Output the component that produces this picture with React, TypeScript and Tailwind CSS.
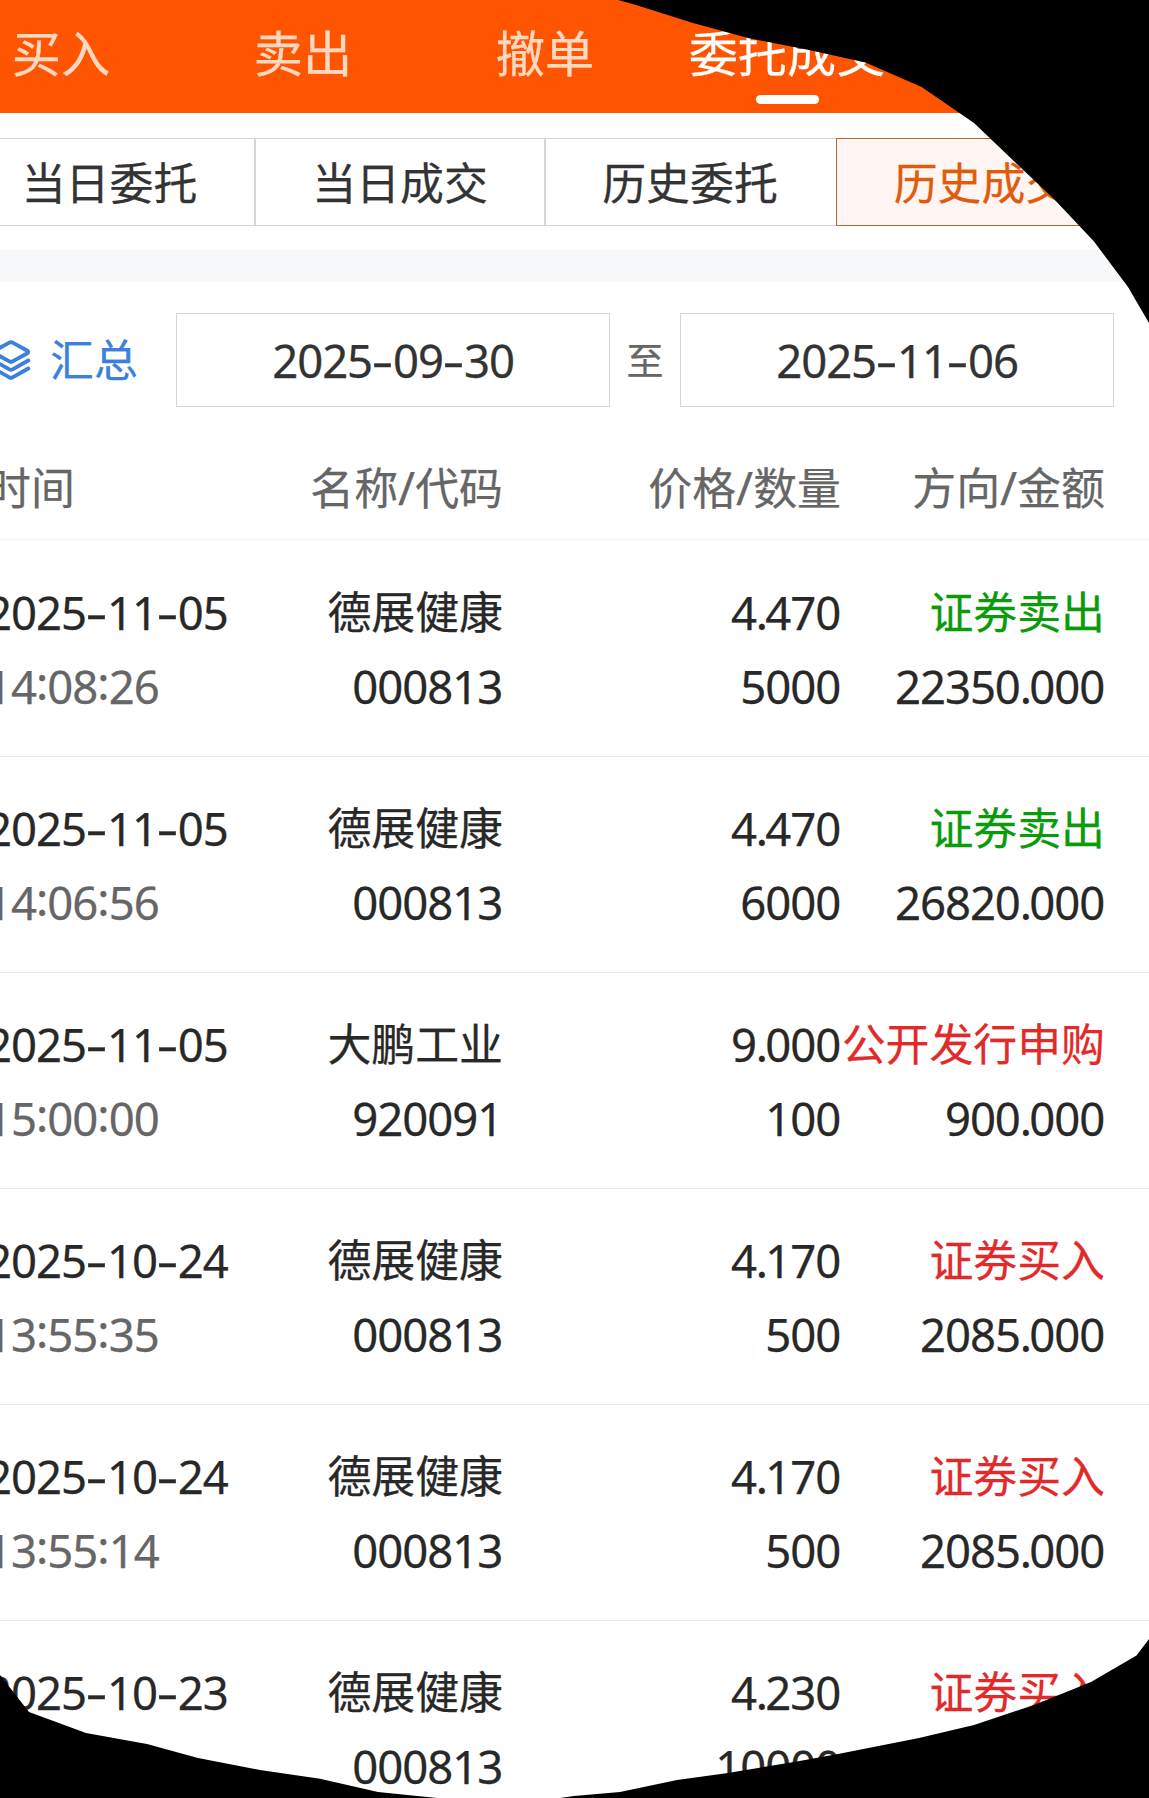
import React from "react";

const navItems = ["买入", "卖出", "撤单", "委托成交"];
const tabs = ["当日委托", "当日成交", "历史委托", "历史成交"];

const tabStyles = [
  "w-[290px] border-y border-[#d3d6d9] pl-px text-[#333333]",
  "w-[290px] border-y border-l-2 border-[#d3d6d9] text-[#333333]",
  "w-[292px] border-y border-l-2 border-[#d3d6d9] pr-[2px] text-[#333333]",
  "w-[291px] border border-[#c0632f] bg-[#fff6f3] text-[#e25a0c]",
];

type Trade = {
  date: string;
  time: string;
  name: string;
  code: string;
  price: string;
  qty: string;
  side: string;
  amount: string;
  sell?: boolean;
};

const trades: Trade[] = [
  { date: "2025-11-05", time: "14:08:26", name: "德展健康", code: "000813", price: "4.470", qty: "5000", side: "证券卖出", amount: "22350.000", sell: true },
  { date: "2025-11-05", time: "14:06:56", name: "德展健康", code: "000813", price: "4.470", qty: "6000", side: "证券卖出", amount: "26820.000", sell: true },
  { date: "2025-11-05", time: "15:00:00", name: "大鹏工业", code: "920091", price: "9.000", qty: "100", side: "公开发行申购", amount: "900.000" },
  { date: "2025-10-24", time: "13:55:35", name: "德展健康", code: "000813", price: "4.170", qty: "500", side: "证券买入", amount: "2085.000" },
  { date: "2025-10-24", time: "13:55:14", name: "德展健康", code: "000813", price: "4.170", qty: "500", side: "证券买入", amount: "2085.000" },
  { date: "2025-10-23", time: "10:32:18", name: "德展健康", code: "000813", price: "4.230", qty: "10000", side: "证券买入", amount: "42300.000" },
];

/** Figures with wide dashes, raised colons and tight decimal points. */
function Num({ children }: { children: string }) {
  return (
    <span className="mr-[0.8px] font-['Noto_Sans','Noto_Sans_CJK_SC',sans-serif] text-[45.5px] tracking-[-1.05px] whitespace-nowrap">
      {children.split(/([-:.])/).map((part, i) => {
        if (part === "-")
          return (
            <span key={i} className="inline-block w-[21px] -translate-y-px scale-x-150 text-center tracking-normal">
              -
            </span>
          );
        if (part === ":")
          return (
            <span key={i} className="inline-block w-[11.4px] -translate-y-1 text-center tracking-normal">
              :
            </span>
          );
        if (part === ".")
          return (
            <span key={i} className="tracking-[-2.8px]">
              .
            </span>
          );
        return part;
      })}
    </span>
  );
}

function LayersIcon() {
  return (
    <svg className="mb-[3px] h-[42px] w-[42px] shrink-0" viewBox="0 0 42 42" fill="none" stroke="#3a80dc" strokeWidth="3.9" strokeLinejoin="round" strokeLinecap="round">
      <path d="M19.4 4.6Q21 3.8 22.6 4.6L37.4 12.8Q39 14 37.4 15.2L22.6 23.4Q21 24.2 19.4 23.4L4.6 15.2Q3 14 4.6 12.8Z" />
      <path d="M3.5 22.5 19.4 31.4Q21 32.3 22.6 31.4L38.3 22.5" />
      <path d="M3.5 30.5 19.4 39.4Q21 40.2 22.6 39.4L38.3 30.5" />
    </svg>
  );
}

function DateBox({ value }: { value: string }) {
  return (
    <div className="flex h-[94px] w-[434px] items-center justify-center border border-[#d5d7d9] pl-px text-[#333333]">
      <Num>{value}</Num>
    </div>
  );
}

const columns = "-ml-[13px] grid grid-cols-[240px_276px_338px_264px] whitespace-nowrap";

function HeadCell({ left, right }: { left: string; right: string }) {
  return (
    <div className="text-right">
      {left}
      <span className="font-['Noto_Sans',sans-serif] text-[46px]">/</span>
      {right}
    </div>
  );
}

function TradeRow({ trade }: { trade: Trade }) {
  const sideColor = trade.sell ? "text-[#0a9b0a]" : "text-[#e22a2a]";
  return (
    <div className="h-[216px] border-b border-[#ebebeb] pt-[33px] text-[#282828]">
      <div className={`${columns} h-[74px] leading-[74px]`}>
        <div className="-ml-px"><Num>{trade.date}</Num></div>
        <div className="text-right leading-[73px]">{trade.name}</div>
        <div className="text-right"><Num>{trade.price}</Num></div>
        <div className={`flex justify-end leading-[73px] ${sideColor}`}>{trade.side}</div>
      </div>
      <div className={`${columns} h-[74px] leading-[74px]`}>
        <div className="-ml-px text-[#666666]"><Num>{trade.time}</Num></div>
        <div className="text-right"><Num>{trade.code}</Num></div>
        <div className="text-right"><Num>{trade.qty}</Num></div>
        <div className="text-right"><Num>{trade.amount}</Num></div>
      </div>
    </div>
  );
}

export default function App() {
  return (
    <div className="relative h-[1798px] w-[1149px] overflow-hidden bg-white font-['Noto_Sans_CJK_SC',sans-serif] text-[43.9px] [-webkit-text-stroke:0.25px]">
      <nav className="flex h-[113px] bg-[#ff5500]">
        <div className="-ml-[60px] flex">
          {navItems.map((item, i) => (
            <div
              key={item}
              className={`flex w-[242px] flex-col items-center pt-[15px] text-[49.2px] leading-[72px] whitespace-nowrap ${
                i === 3 ? "text-white" : "text-[#ffd8c2]"
              }`}
            >
              {item}
              {i === 3 && <span className="mt-[8px] h-[9px] w-[63px] rounded-full bg-white" />}
            </div>
          ))}
        </div>
      </nav>

      <div className="flex h-[137px] items-start pt-[25px]">
        <div className="-ml-[36px] flex">
          {tabs.map((tab, i) => (
            <div key={tab} className={`flex h-[88px] items-center justify-center pb-px whitespace-nowrap ${tabStyles[i]}`}>
              {tab}
            </div>
          ))}
        </div>
      </div>

      <div className="h-8 bg-[#f6f8fa]" />

      <div className="flex h-[156px] items-start pt-[31px]">
        <div className="-ml-[10.5px] flex h-[94px] w-[186.5px] items-center text-[#3a80dc]">
          <LayersIcon />
          <span className="mb-[2px] ml-[18.5px]">汇总</span>
        </div>
        <DateBox value="2025-09-30" />
        <div className="flex h-[94px] w-[70px] items-center justify-center pb-px text-[37px] text-[#666666]">至</div>
        <DateBox value="2025-11-06" />
      </div>

      <div className="h-[103px] border-b-3 border-[#f8f8f8] text-[#666666]">
        <div className={`${columns} pt-[12px] leading-[72px]`}>
          <div>时间</div>
          <HeadCell left="名称" right="代码" />
          <HeadCell left="价格" right="数量" />
          <HeadCell left="方向" right="金额" />
        </div>
      </div>

      <div>
        {trades.map((trade) => (
          <TradeRow key={trade.date + trade.time} trade={trade} />
        ))}
      </div>

      <svg className="pointer-events-none absolute inset-0" width="1149" height="1798" viewBox="0 0 1149 1798" fill="#000">
        <polygon points="618,0 636,5 693,23 748,38 809,50 865.5,62.5 921.6,87 974,123 1018,165 1054,199 1094,241.5 1128,287 1149,323 1149,0" />
        <polygon points="1149,1639 1136.5,1655.5 1091,1682 1034,1705 974,1725 919,1738 838,1754 794,1762 728,1773 677,1780 620,1792 574,1796 560,1798 1149,1798" />
        <polygon points="437,1798 378,1792 320,1778.7 260,1770 198,1758 147,1744 86,1733 29,1712 0,1675 0,1798" />
      </svg>
    </div>
  );
}
